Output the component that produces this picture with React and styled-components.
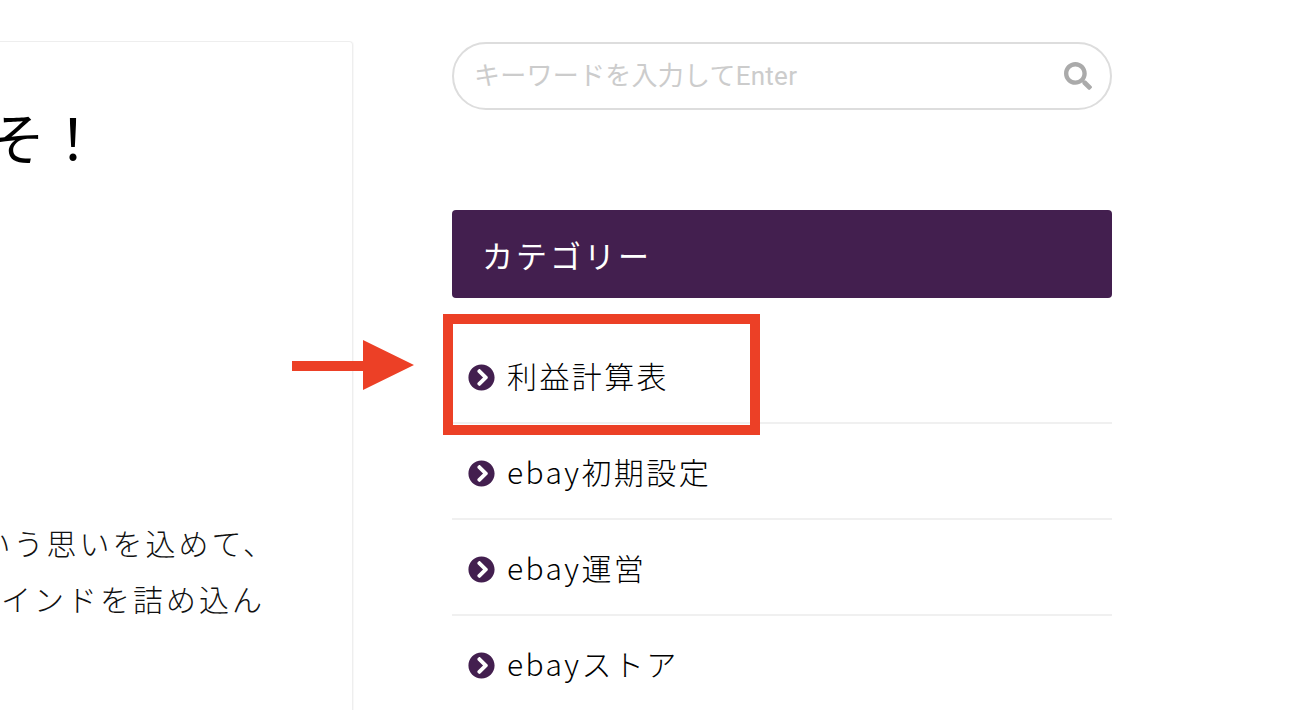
import React from "react";
import styled, { createGlobalStyle } from "styled-components";
import { FaChevronCircleRight, FaSearch } from "react-icons/fa";

const Global = createGlobalStyle`
  html, body { margin: 0; padding: 0; background: #fff; overflow: hidden; }
  body { font-family: "Noto Sans CJK JP", "Noto Sans", sans-serif; color: #000; }
`;

const Page = styled.div`
  position: relative;
  width: 1310px;
  height: 710px;
  overflow: hidden;
  display: flex;
  align-items: flex-start;
  background: #fff;
`;

const Article = styled.main`
  box-sizing: border-box;
  width: 353px;
  height: 760px;
  margin-top: 41px;
  margin-right: 1px;
  border: 1px solid #eee;
  border-left: 0;
  border-radius: 0 4px 0 0;
  box-shadow: 1px 0 1px rgba(0, 0, 0, 0.03);
  display: flex;
  flex-direction: column;
  align-items: flex-end;
  overflow: hidden;
  padding-right: 82px;
`;

const Heading = styled.h1`
  margin: 64px 169px 0 0;
  font-size: 56px;
  line-height: 60px;
  font-weight: 400;
  white-space: nowrap;
`;

const Body = styled.p`
  margin: 0 ${(p) => p.$endGap}px 0 0;
  font-size: 30px;
  line-height: 56px;
  font-weight: 300;
  letter-spacing: 3px;
  white-space: nowrap;
  color: #111;
  &:first-of-type { margin-top: 348px; }
`;

const Sidebar = styled.aside`
  width: 660px;
  margin: 42px 0 0 98px;
  flex: none;
`;

const Search = styled.div`
  box-sizing: border-box;
  height: 68px;
  border: 2px solid #ddd;
  border-radius: 34px;
  display: flex;
  align-items: center;
  justify-content: space-between;
  padding: 0 18px 0 20px;
`;

const Placeholder = styled.span`
  font-family: Roboto, "Noto Sans CJK JP", sans-serif;
  font-size: 26px;
  line-height: 36px;
  color: #ccc;
  letter-spacing: 0.25px;
`;

const SearchIcon = styled(FaSearch)`
  width: 28px;
  height: 28px;
  color: #aaa;
`;

const CategoryTitle = styled.h2`
  box-sizing: border-box;
  height: 88px;
  margin: 100px 0 30px;
  padding: 0 30px;
  display: flex;
  align-items: center;
  background: #431f4f;
  border-radius: 4px;
  color: #fff;
  font-size: 31px;
  font-weight: 400;
  letter-spacing: 3px;
`;

const List = styled.ul`
  list-style: none;
  margin: 0;
  padding: 0;
`;

const Item = styled.li`
  box-sizing: border-box;
  height: 96px;
  border-bottom: 2px solid #f0f0f0;
  display: flex;
  align-items: center;
  gap: 12px;
  padding: 0 0 0 16px;
  font-size: 30px;
  font-weight: 300;
  letter-spacing: 2.4px;
`;

const Bullet = styled(FaChevronCircleRight)`
  width: 27px;
  height: 27px;
  flex: none;
  margin-top: 5px;
  color: #431f4f;
`;

const Highlight = styled.div`
  position: absolute;
  left: 443px;
  top: 314px;
  width: 317px;
  height: 121px;
  box-sizing: border-box;
  border: 10px solid #ec4026;
`;

const Arrow = styled.svg`
  position: absolute;
  left: 292px;
  top: 340px;
  width: 122px;
  height: 50px;
`;

const items = ["利益計算表", "ebay初期設定", "ebay運営", "ebayストア"];

export default function App() {
  return (
    <Page>
      <Global />
      <Article>
        <Heading>ようこそ！</Heading>
        <Body $endGap={-6}>という思いを込めて、</Body>
        <Body $endGap={5}>マインドを詰め込ん</Body>
      </Article>
      <Sidebar>
        <Search>
          <Placeholder>キーワードを入力してEnter</Placeholder>
          <SearchIcon />
        </Search>
        <CategoryTitle>カテゴリー</CategoryTitle>
        <List>
          {items.map((t) => (
            <Item key={t}>
              <Bullet />
              {t}
            </Item>
          ))}
        </List>
      </Sidebar>
      <Highlight />
      <Arrow viewBox="0 0 122 50">
        <path d="M0 21H71V0L122 25 71 50V31H0Z" fill="#ec4026" />
      </Arrow>
    </Page>
  );
}
